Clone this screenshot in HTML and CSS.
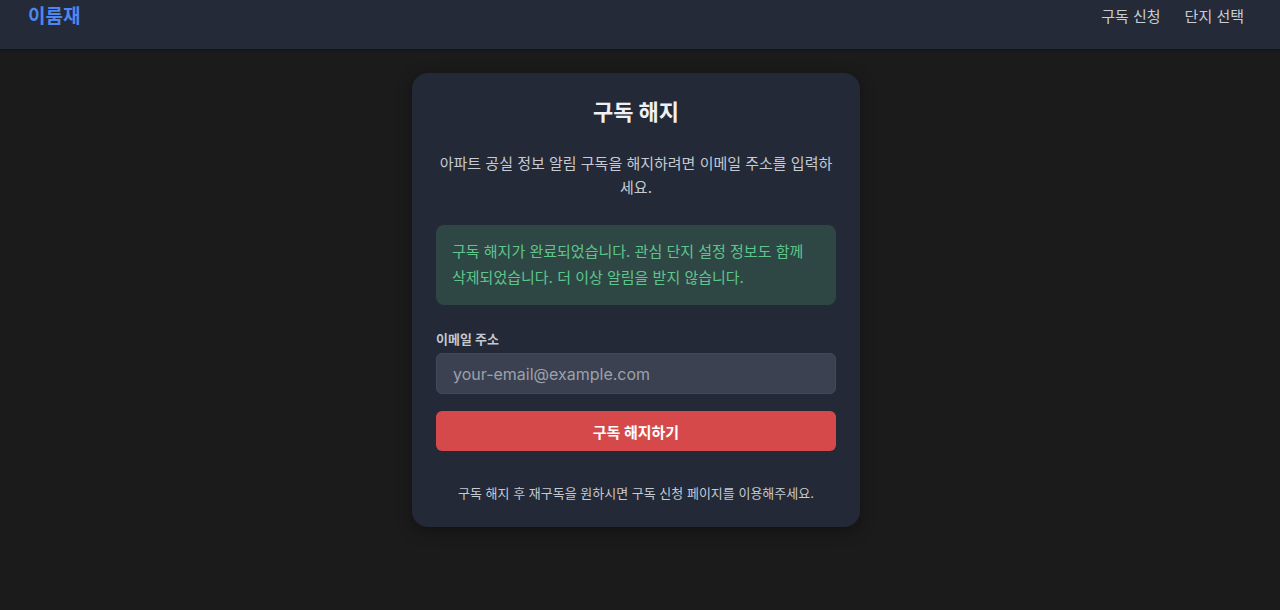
FILE: index.html
```html
<!DOCTYPE html>
<html lang="ko">
<head>
<meta charset="utf-8">
<title>구독 해지</title>
<link rel="stylesheet" href="styles.css">
</head>
<body>
<header class="topbar">
  <a class="logo" href="#">이룸재</a>
  <nav class="nav">
    <a href="#">구독 신청</a>
    <a href="#">단지 선택</a>
  </nav>
</header>
<main class="main">
  <section class="card">
    <h1 class="title">구독 해지</h1>
    <p class="desc">아파트 공실 정보 알림 구독을 해지하려면 이메일 주소를 입력하세요.</p>
    <div class="alert">구독 해지가 완료되었습니다. 관심 단지 설정 정보도 함께 삭제되었습니다. 더 이상 알림을 받지 않습니다.</div>
    <form class="form">
      <label class="label" for="email">이메일 주소</label>
      <input class="input" id="email" type="email" placeholder="your-email@example.com">
      <button class="btn" type="button">구독 해지하기</button>
    </form>
    <p class="foot">구독 해지 후 재구독을 원하시면 구독 신청 페이지를 이용해주세요.</p>
  </section>
</main>
</body>
</html>
```

FILE: styles.css
```css
* { box-sizing: border-box; }
html, body { margin: 0; padding: 0; }
body {
  background: #1b1b1c;
  font-family: "Inter", "Noto Sans CJK KR", sans-serif;
  color: #e6e8ec;
  height: 610px;
  overflow: hidden;
}
.topbar {
  height: 49px;
  background: #242a37;
  display: flex;
  justify-content: space-between;
  align-items: flex-start;
  padding: 4px 36px 0 28px;
  box-shadow: 0 1px 3px rgba(0,0,0,0.3);
}
.logo {
  color: #4f86f0;
  font-weight: 700;
  font-size: 19px;
  text-decoration: none;
  line-height: 26px;
}
.nav {
  display: flex;
  gap: 24px;
  padding-top: 1px;
}
.nav a {
  color: #c9cdd4;
  text-decoration: none;
  font-size: 15px;
  line-height: 24px;
}
.main {
  display: flex;
  justify-content: center;
  padding: 24px 8px 0 0;
}
.card {
  width: 448px;
  background: #232937;
  border-radius: 16px;
  padding: 22px 24px 24px;
  box-shadow: 0 4px 16px rgba(0,0,0,0.35);
}
.title {
  margin: 0;
  text-align: center;
  font-size: 22px;
  font-weight: 700;
  line-height: 34px;
  color: #eef0f3;
}
.desc {
  margin: 23px 0 0;
  text-align: center;
  font-size: 15px;
  line-height: 24px;
  color: #c6cad1;
}
.alert {
  margin-top: 25px;
  background: #2e4745;
  border-radius: 8px;
  padding: 14px 16px 14px;
  color: #5fc58c;
  font-size: 15px;
  line-height: 26px;
}
.form {
  margin-top: 24px;
  display: flex;
  flex-direction: column;
}
.label {
  font-size: 13px;
  font-weight: 700;
  color: #c3c7ce;
  line-height: 20px;
  margin-bottom: 4px;
}
.input {
  height: 41px;
  background: #3b4150;
  border: 1px solid #434959;
  border-radius: 6px;
  padding: 0 16px;
  font-family: inherit;
  font-size: 16px;
  color: #e6e8ec;
  outline: none;
}
.input::placeholder { color: #9ba1ab; }
.btn {
  margin-top: 17px;
  height: 40px;
  background: #d5494a;
  border: none;
  border-radius: 6px;
  color: #ffffff;
  font-family: inherit;
  font-size: 15px;
  font-weight: 700;
}
.foot {
  margin: 32px 0 0;
  text-align: center;
  font-size: 13px;
  line-height: 20px;
  color: #c6cad1;
}
```
